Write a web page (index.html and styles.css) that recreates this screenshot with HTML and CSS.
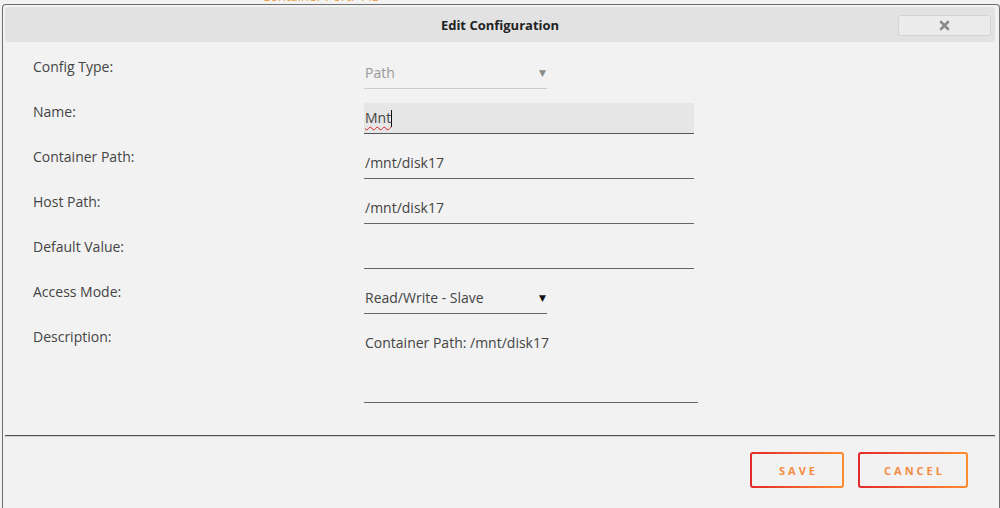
FILE: index.html
```html
<!DOCTYPE html>
<html lang="en">
<head>
    <meta charset="UTF-8">
    <title>Edit Configuration</title>
    <link rel="stylesheet" href="styles.css">
</head>
<body>
    <div class="backdrop">
        <span class="backdrop-text">Container Port: 443</span>
    </div>

    <div class="dialog">
        <div class="titlebar">
            <span class="title">Edit Configuration</span>
            <button class="close-btn" type="button">
                <svg width="11" height="11" viewBox="0 0 11 11">
                    <path d="M2 2 L9 9 M9 2 L2 9" stroke="#8a8a8a" stroke-width="2.6" stroke-linecap="round"/>
                </svg>
            </button>
        </div>

        <div class="form">
            <div class="row">
                <div class="label">Config Type:</div>
                <div class="field select disabled">
                    <span>Path</span>
                    <span class="arrow">&#9660;</span>
                </div>
            </div>
            <div class="row">
                <div class="label">Name:</div>
                <div class="field wide focused">
                    <span class="misspelt">Mnt</span><span class="caret"></span>
                </div>
            </div>
            <div class="row">
                <div class="label">Container Path:</div>
                <div class="field wide">/mnt/disk17</div>
            </div>
            <div class="row">
                <div class="label">Host Path:</div>
                <div class="field wide">/mnt/disk17</div>
            </div>
            <div class="row">
                <div class="label">Default Value:</div>
                <div class="field wide"></div>
            </div>
            <div class="row">
                <div class="label">Access Mode:</div>
                <div class="field select">
                    <span>Read/Write - Slave</span>
                    <span class="arrow">&#9660;</span>
                </div>
            </div>
            <div class="row row-tall">
                <div class="label">Description:</div>
                <div class="field textarea">Container Path: /mnt/disk17</div>
            </div>
        </div>

        <div class="footer">
            <button class="btn" type="button">SAVE</button>
            <button class="btn btn-cancel" type="button">CANCEL</button>
        </div>
    </div>
</body>
</html>
```

FILE: styles.css
```css
* {
    margin: 0;
    padding: 0;
    box-sizing: border-box;
}

html, body {
    height: 100%;
    overflow: hidden;
}

body {
    font-family: 'Open Sans', 'DejaVu Sans', sans-serif;
    background: #f2f2f2;
    color: #444;
    display: flex;
    flex-direction: column;
}

.backdrop {
    height: 4px;
    flex-shrink: 0;
    overflow: hidden;
    position: relative;
}

.backdrop-text {
    position: absolute;
    left: 262px;
    top: -12px;
    font-size: 13px;
    line-height: 16px;
    color: #e8a245;
}

.dialog {
    flex: 1;
    margin-left: 2px;
    background: #f2f2f2;
    border: 1px solid #6e6e6e;
    border-bottom: none;
    border-radius: 4px 4px 0 0;
    padding: 2px;
}

.titlebar {
    height: 35px;
    background: #e2e2e2;
    border-radius: 4px;
    display: flex;
    align-items: center;
    justify-content: center;
    position: relative;
    margin-right: 2px;
}

.title {
    font-size: 13px;
    font-weight: 700;
    color: #222;
}

.close-btn {
    position: absolute;
    right: 4px;
    top: 8px;
    width: 93px;
    height: 21px;
    background: #ebebeb;
    border: 1px solid #d4d4d4;
    border-radius: 3px;
    display: flex;
    align-items: center;
    justify-content: center;
}

.form {
    padding: 16px 0 0 28px;
}

.row {
    display: grid;
    grid-template-columns: 331px 1fr;
    height: 45px;
}

.row-tall {
    height: 75px;
}

.label {
    font-size: 14px;
    line-height: 18px;
    color: #444;
}

.field {
    height: 31px;
    border-bottom: 1px solid #666;
    font-size: 14px;
    line-height: 30px;
    color: #444;
    padding-left: 1px;
    display: flex;
    align-items: center;
}

.wide {
    width: 330px;
}

.focused {
    background: #e6e6e6;
    border-bottom-color: #555;
}

.misspelt {
    text-decoration: underline wavy #e02020;
    text-decoration-thickness: 1px;
    text-underline-offset: 3px;
}

.caret {
    display: inline-block;
    width: 1px;
    height: 17px;
    background: #111;
}

.select {
    width: 183px;
    justify-content: space-between;
    padding-right: 1px;
}

.select .arrow {
    font-size: 9px;
    color: #111;
}

.disabled {
    color: #999;
    border-bottom-color: #ccc;
}

.disabled .arrow {
    color: #888;
}

.textarea {
    width: 334px;
    height: 75px;
    align-items: flex-start;
}

.footer {
    margin-top: 32px;
    margin-right: 2px;
    border-top: 1px solid #555;
    background: linear-gradient(#cfcfcf, #cfcfcf) top / 100% 1px no-repeat;
    display: flex;
    justify-content: flex-end;
    gap: 14px;
    padding: 16px 27px 0 0;
}

.btn {
    height: 36px;
    width: 94px;
    border: 2px solid transparent;
    border-radius: 3px;
    background: linear-gradient(#f2f2f2, #f2f2f2) padding-box,
                linear-gradient(90deg, #e22a2a, #ff8c2f) border-box;
    font-family: 'Open Sans', 'DejaVu Sans', sans-serif;
    font-size: 11px;
    font-weight: 700;
    letter-spacing: 3px;
    color: #f58c42;
    padding-left: 3px;
}

.btn-cancel {
    width: 110px;
}
```
